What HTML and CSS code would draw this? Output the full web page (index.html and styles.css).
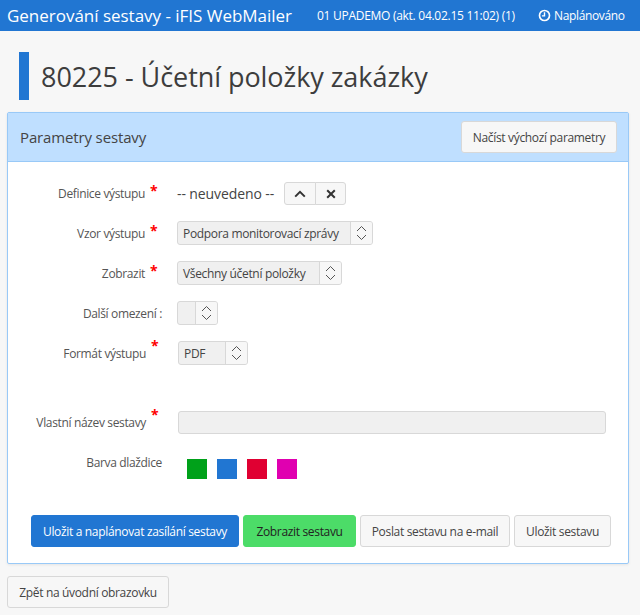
FILE: index.html
```html
<!DOCTYPE html>
<html lang="cs">
<head>
<meta charset="utf-8">
<title>Generování sestavy - iFIS WebMailer</title>
<link rel="stylesheet" href="styles.css">
</head>
<body>
<header class="topbar">
  <div class="brand">Generování sestavy - iFIS WebMailer</div>
  <div class="db">01 UPADEMO (akt. 04.02.15 11:02) (1)</div>
  <div class="status">
    <svg class="clock" viewBox="0 0 14 14" width="13" height="13"><circle cx="7" cy="7" r="5.4" fill="none" stroke="#fff" stroke-width="1.8"/><path d="M7 3.6V7.4H4.2" fill="none" stroke="#fff" stroke-width="1.5"/></svg>
    <span>Naplánováno</span>
  </div>
</header>
<div class="title-row">
  <div class="title-bar"></div>
  <h1>80225 - Účetní položky zakázky</h1>
</div>
<section class="panel">
  <div class="panel-head">
    <h2>Parametry sestavy</h2>
    <button class="btn btn-load">Načíst výchozí parametry</button>
  </div>
  <div class="panel-body">
    <div class="row row-def">
      <div class="label">Definice výstupu<span class="star">*</span></div>
      <div class="control">
        <span class="none">-- neuvedeno --</span>
        <div class="group">
          <button class="gbtn"><svg viewBox="0 0 12 8" width="12" height="8"><path d="M1.2 6.6 6 1.8l4.8 4.8" fill="none" stroke="#333" stroke-width="2"/></svg></button>
          <button class="gbtn"><svg viewBox="0 0 10 10" width="10" height="10"><path d="M1.2 1.2l7.6 7.6M8.8 1.2 1.2 8.8" fill="none" stroke="#333" stroke-width="2"/></svg></button>
        </div>
      </div>
    </div>
    <div class="row">
      <div class="label">Vzor výstupu<span class="star">*</span></div>
      <div class="control"><div class="select s-vzor"><span class="val">Podpora monitorovací zprávy</span><span class="arrows"><svg viewBox="0 0 11 16" width="11" height="16"><path d="M1 6l4.5-4.5L10 6M1 10l4.5 4.5L10 10" fill="none" stroke="#555"/></svg></span></div></div>
    </div>
    <div class="row">
      <div class="label">Zobrazit<span class="star">*</span></div>
      <div class="control"><div class="select s-zob"><span class="val">Všechny účetní položky</span><span class="arrows"><svg viewBox="0 0 11 16" width="11" height="16"><path d="M1 6l4.5-4.5L10 6M1 10l4.5 4.5L10 10" fill="none" stroke="#555"/></svg></span></div></div>
    </div>
    <div class="row">
      <div class="label label-plain">Další omezení :</div>
      <div class="control"><div class="select s-dal"><span class="val"></span><span class="arrows"><svg viewBox="0 0 11 16" width="11" height="16"><path d="M1 6l4.5-4.5L10 6M1 10l4.5 4.5L10 10" fill="none" stroke="#555"/></svg></span></div></div>
    </div>
    <div class="row">
      <div class="label label-wide">Formát výstupu<span class="star star-hi">*</span></div>
      <div class="control"><div class="select s-pdf"><span class="val">PDF</span><span class="arrows"><svg viewBox="0 0 11 16" width="11" height="16"><path d="M1 6l4.5-4.5L10 6M1 10l4.5 4.5L10 10" fill="none" stroke="#555"/></svg></span></div></div>
    </div>
    <div class="row row-name">
      <div class="label label-wide">Vlastní název sestavy<span class="star star-hi">*</span></div>
      <div class="control"><div class="input"></div></div>
    </div>
    <div class="row row-colors">
      <div class="label label-color">Barva dlaždice</div>
      <div class="swatches">
        <span class="sw sw-green"></span><span class="sw sw-blue"></span><span class="sw sw-red"></span><span class="sw sw-pink"></span>
      </div>
    </div>
    <div class="actions">
      <button class="btn btn-primary">Uložit a naplánovat zasílání sestavy</button>
      <button class="btn btn-success">Zobrazit sestavu</button>
      <button class="btn btn-mail">Poslat sestavu na e-mail</button>
      <button class="btn btn-save">Uložit sestavu</button>
    </div>
  </div>
</section>
<div class="back"><button class="btn btn-back">Zpět na úvodní obrazovku</button></div>
</body>
</html>
```
FILE: styles.css
```css
* { box-sizing: border-box; }
html, body { margin: 0; padding: 0; }
body {
  width: 640px;
  height: 615px;
  overflow: hidden;
  background: #f7f7f7;
  color: #444;
  font-family: "Open Sans", "Noto Sans", sans-serif;
  font-size: 12px;
}
button { font-family: inherit; }
.topbar {
  height: 31px;
  background: #2176d2;
  color: #fff;
  display: flex;
  align-items: center;
  padding: 0 15px 0 7px;
}
.brand { font-size: 17px; letter-spacing: -0.02px; width: 310px; white-space: nowrap; }
.db { font-size: 12px; letter-spacing: -0.28px; white-space: nowrap; width: 221px; }
.status { font-size: 12px; letter-spacing: -0.35px; display: flex; align-items: center; gap: 3px; white-space: nowrap; }
.clock { display: block; }
.title-row {
  display: flex;
  align-items: center;
  gap: 12px;
  margin: 21px 0 12px 19px;
  height: 48px;
}
.title-bar { width: 10px; height: 48px; background: #2176d2; }
h1 { margin: 0; font-size: 27px; font-weight: 400; color: #3d3d3d; letter-spacing: -0.05px; white-space: nowrap; }
.panel {
  width: 622px;
  height: 452px;
  margin-left: 7px;
  border: 1px solid #99c9f7;
  border-radius: 2px;
  background: #fff;
  box-shadow: 0 1px 3px rgba(0,0,0,0.08);
}
.panel-head {
  height: 49px;
  background: #bfdfff;
  border-bottom: 1px solid #99c9f7;
  display: flex;
  align-items: center;
  justify-content: space-between;
  padding: 0 11px 0 12px;
}
h2 { margin: 0; font-size: 15px; font-weight: 400; color: #444; letter-spacing: -0.14px; }
.btn {
  height: 32px;
  padding: 0;
  border: 1px solid #d8d8d8;
  border-radius: 3px;
  background: #f7f7f7;
  color: #444;
  font-size: 12px;
  letter-spacing: -0.33px;
  white-space: nowrap;
  flex: none;
}
.btn-load { width: 156px; }
.panel-body { padding: 20px 0 0; }
.row { display: flex; align-items: center; height: 24px; margin-bottom: 16px; }
.row-def { height: 23px; }
.label {
  width: 142px;
  flex: none;
  text-align: right;
  font-size: 12px;
  line-height: 16px;
  padding-top: 1px;
  letter-spacing: -0.35px;
  color: #555;
  white-space: nowrap;
}
.star { color: #f00; font-weight: 700; font-size: 14px; line-height: 0; display: inline-block; width: 0; margin-left: 5px; vertical-align: 2px; }
.star-hi { vertical-align: 7px; }
.label-plain { width: 154px; }
.label-wide { width: 143px; }
.control { display: flex; align-items: center; margin-left: 27px; flex: 1; }
.label-plain + .control { margin-left: 15px; }
.label-wide + .control { margin-left: 26px; }
.none { font-size: 14px; letter-spacing: -0.1px; color: #444; width: 107px; white-space: nowrap; }
.group { display: flex; }
.gbtn {
  width: 32px;
  height: 23px;
  padding: 0;
  background: #f7f7f7;
  border: 1px solid #d8d8d8;
  border-radius: 3px;
  display: flex;
  align-items: center;
  justify-content: center;
}
.group .gbtn:first-child { border-radius: 3px 0 0 3px; }
.group .gbtn:last-child { width: 31px; margin-left: -1px; border-radius: 0 3px 3px 0; }
.select {
  display: flex;
  height: 24px;
  background: #f0f0f0;
  border: 1px solid #d8d8d8;
  border-radius: 3px;
  color: #444;
  letter-spacing: -0.33px;
}
.val { flex: 1; padding-left: 5px; line-height: 23px; white-space: nowrap; font-size: 12px; }
.arrows { width: 22px; flex: none; border-left: 1px solid #d8d8d8; background: #f7f7f7; display: flex; align-items: center; justify-content: center; border-radius: 0 2px 2px 0; }
.s-vzor { width: 196px; }
.s-zob { width: 165px; }
.s-dal { width: 41px; }
.s-pdf { width: 70px; margin-left: 1px; }
.row-name { margin-top: 46px; margin-bottom: 25px; height: 23px; }
.input { margin-left: 1px; width: 428px; height: 23px; background: #f0f0f0; border: 1px solid #d8d8d8; border-radius: 3px; }
.row-colors { height: 20px; margin-bottom: 36px; align-items: flex-start; }
.label-color { width: 154px; line-height: 8px; padding-top: 0; }
.swatches { display: flex; gap: 10px; margin-left: 25px; }
.sw { width: 20px; height: 20px; display: block; }
.sw-green { background: #00a11a; }
.sw-blue { background: #2176d2; }
.sw-red { background: #e00032; }
.sw-pink { background: #e000b0; }
.actions { display: flex; gap: 4px; padding-left: 23px; }
.btn-primary { width: 208px; background: #2176d2; border-color: #2176d2; color: #fff; }
.btn-success { width: 113px; background: #4cdc68; border-color: #4cdc68; color: #222; }
.btn-mail { width: 150px; }
.btn-save { width: 97px; }
.btn-back { width: 162px; }
.back { margin: 12px 0 0 7px; }
```
